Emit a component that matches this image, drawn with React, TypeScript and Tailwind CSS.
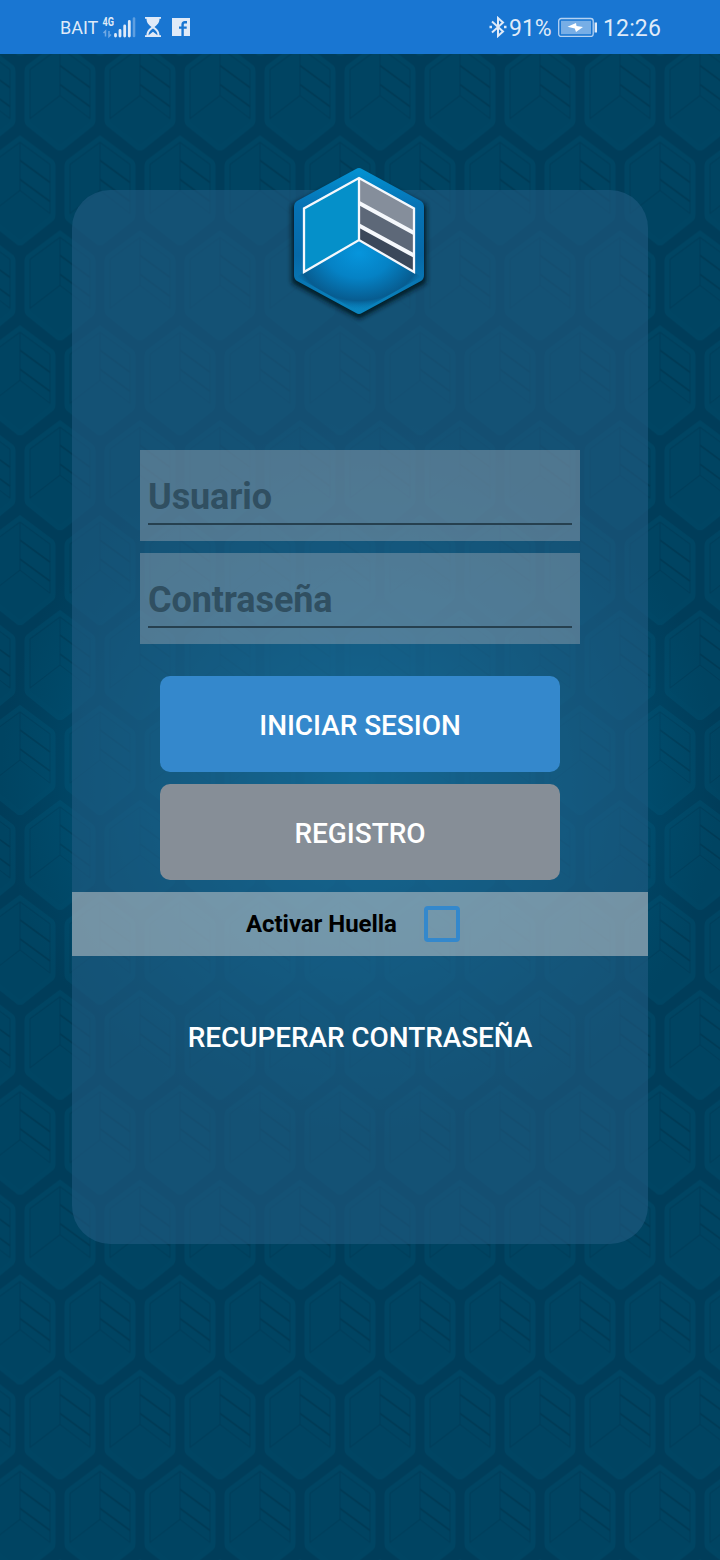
import React from 'react';

const HexCell: React.FC<{ x: number; y: number }> = ({ x, y }) => (
  <g transform={`translate(${x} ${y})`} strokeLinejoin="round">
    <path d="M0 3 L32 27 Q34.5 29 34.5 33 V81 Q34.5 85 32 87 L3 110 Q0 112 -3 110 L-32 87 Q-34.5 85 -34.5 81 V33 Q-34.5 29 -32 27 Z" fill="#004563" stroke="#004563" strokeWidth="2" />
    <path d="M0 7 L30 29 V83 L0 107 L-30 83 V29 Z" fill="#004462" />
    <path d="M0 9 L30 31 V80 L0 57 L-30 80 V31 Z M0 9 V57" fill="none" stroke="#003d5a" strokeWidth="1.1" />
    <path d="M0 27 L30 49 M0 46 L30 68" stroke="#003a55" strokeWidth="1.7" />
  </g>
);

const Background: React.FC = () => (
  <svg className="absolute inset-0 w-full h-full" aria-hidden="true">
    <defs>
      <pattern id="hexes" width="80" height="189.85" patternUnits="userSpaceOnUse" y="133.5">
        <rect width="80" height="190" fill="#003d5a" />
        <HexCell x={20} y={0} />
        <HexCell x={100} y={0} />
        <HexCell x={-20} y={94.92} />
        <HexCell x={60} y={94.92} />
        <HexCell x={-20} y={-94.92} />
        <HexCell x={60} y={-94.92} />
        <HexCell x={20} y={189.85} />
      </pattern>
      <radialGradient id="glow" gradientUnits="userSpaceOnUse" cx="360" cy="780" r="360">
        <stop offset="0" stopColor="#008cc4" stopOpacity="0.78" />
        <stop offset="0.5" stopColor="#0080b8" stopOpacity="0.36" />
        <stop offset="1" stopColor="#00709c" stopOpacity="0" />
      </radialGradient>
    </defs>
    <rect width="100%" height="100%" fill="url(#hexes)" />
    <rect width="100%" height="100%" fill="url(#glow)" />
  </svg>
);

const Logo: React.FC = () => (
  <svg className="-mt-[35px] w-40 h-[175px] shrink-0" viewBox="0 0 160 175">
    <defs>
      <linearGradient id="logoBody" x1="0" y1="0" x2="0" y2="1">
        <stop offset="0" stopColor="#0293d3" />
        <stop offset="0.25" stopColor="#0673b5" />
        <stop offset="0.6" stopColor="#0669a8" />
        <stop offset="1" stopColor="#0a86c0" />
      </linearGradient>
      <radialGradient id="logoShine" gradientUnits="userSpaceOnUse" cx="0" cy="0" r="1" gradientTransform="translate(79 98) scale(72 56)">
        <stop offset="0" stopColor="#0695dc" />
        <stop offset="0.45" stopColor="#0582c5" />
        <stop offset="0.85" stopColor="#075c90" />
        <stop offset="1" stopColor="#0675b0" stopOpacity="0" />
      </radialGradient>
      <filter id="logoShadow" x="-20%" y="-20%" width="140%" height="140%">
        <feGaussianBlur stdDeviation="2.5" />
      </filter>
    </defs>
    <path d="M79 18 L146 50 V128 L79 164 L12 128 V50 Z" fill="#04141f" opacity="0.9" filter="url(#logoShadow)" />
    <path d="M76 14 Q79 12 82 14 L141 46 Q144 48 144 52 V120 Q144 124 141 126 L82 158 Q79 160 76 158 L17 126 Q14 124 14 120 V52 Q14 48 17 46 Z" fill="url(#logoBody)" />
    <path d="M79 85 L134 117 L141 122 L79 157 L17 122 L24 117 Z" fill="url(#logoShine)" />
    <path d="M79 23 L24 53.5 V117 L79 85 Z" fill="#0590c9" />
    <path d="M79 23 L134 53.5 V79 L79 47 Z" fill="#858e9b" />
    <path d="M79 47 L134 79 V101 L79 69 Z" fill="#5d6878" />
    <path d="M79 69 L134 101 V117 L79 85 Z" fill="#3b485a" />
    <path d="M79 48 L134 78 M79 70.5 L134 100.5" stroke="#f5f8fc" strokeWidth="4.2" />
    <path d="M79 23 L134 53.5 V117 L79 85 L24 117 V53.5 Z M79 23 V85" fill="none" stroke="#f5f8fc" strokeWidth="2.3" />
  </svg>
);

const StatusBar: React.FC = () => (
  <header className="relative flex h-[54px] items-center justify-between bg-[#1976d2] pl-[60px] pr-[59px] text-[#dfeaf8]">
    <div className="flex items-center">
      <span className="w-[42px] pt-0.5 text-[18px] leading-none">BAIT</span>
      <svg className="w-[34px] h-[24px]" viewBox="102 15 34 24">
        <text x="102.5" y="26" fontSize="12.5" fontWeight="700" textLength="11.5" lengthAdjust="spacingAndGlyphs" fill="currentColor">4G</text>
        <path d="M105.5 36.5 V31 L103.5 33 M109 31 V36.5 L111 34.5" stroke="#70a9e4" strokeWidth="1.5" fill="none" />
        <path d="M115.5 34.5 V36 M120 30.5 V36 M124.7 26 V36 M129.3 21.5 V36" stroke="currentColor" strokeWidth="2.8" strokeLinecap="round" />
        <path d="M134 18.5 V36" stroke="#5e9fe0" strokeWidth="2.6" strokeLinecap="round" />
      </svg>
      <svg className="ml-[9px] w-4 h-5" viewBox="0 0 16 20">
        <path d="M0 0 H16 V1.8 H14.5 C14.5 6 12 8 9.5 10 C12 12 14.5 14 14.5 18.2 H16 V20 H0 V18.2 H1.5 C1.5 14 4 12 6.5 10 C4 8 1.5 6 1.5 1.8 H0 Z" fill="currentColor" />
        <path d="M3.5 18.2 C3.5 14.8 5.5 13 8 11.5 C10.5 13 12.5 14.8 12.5 18.2 L8 14.8 Z" fill="#1976d2" />
      </svg>
      <svg className="ml-[11px] w-[18px] h-[18px]" viewBox="0 0 18 18">
        <rect width="18" height="18" fill="currentColor" />
        <path d="M15 4.2 H12.8 Q10.6 4.2 10.6 6.5 V18 M7 9.6 H14.7" fill="none" stroke="#1976d2" strokeWidth="2.4" />
      </svg>
    </div>
    <div className="flex items-center text-[23px] leading-none">
      <svg className="w-[18px] h-[22px]" viewBox="0 0 18 22" fill="none" stroke="currentColor" strokeWidth="2">
        <path d="M3 5.5 L14 15.5 L9 20 V2 L14 6.5 L3 16.5" />
        <path d="M0.5 11 H3 M15 11 H17.5" strokeWidth="2.4" />
      </svg>
      <span className="ml-0.5 w-[49px] pt-0.5">91%</span>
      <svg className="w-[39px] h-5" viewBox="0 0 39 20">
        <rect x="0.7" y="1.5" width="34.5" height="18" rx="2.5" fill="none" stroke="#b5d2f2" strokeWidth="1.3" />
        <rect x="3" y="3.8" width="30" height="13.4" fill="#77aee6" />
        <path d="M9.5 9.8 L18 6 L18.5 9 L25 10 L18 15 L16.8 11.5 Z" fill="#fff" />
        <path d="M37.8 5.5 V15.5" stroke="currentColor" strokeWidth="2.4" />
      </svg>
      <span className="ml-1.5 w-[58px] whitespace-nowrap pt-0.5 tracking-[0.15px]">12:26</span>
    </div>
  </header>
);

const Field: React.FC<{ label: string }> = ({ label }) => (
  <label className="flex h-[91px] w-[440px] flex-col bg-[#a8b0b8]/40 px-2 pt-[22px]">
    <span className="h-[53px] border-b-2 border-[#26404f] text-[36px] font-bold leading-[51px] tracking-[-0.1px] text-[#304f61]">{label}</span>
  </label>
);

const App: React.FC = () => {
  return (
    <div className="relative h-[1560px] w-[720px] overflow-hidden bg-[#004361] font-[Roboto,sans-serif]">
      <Background />
      <StatusBar />

      <main className="relative mx-[72px] mt-[136px] flex h-[1054px] flex-col items-center rounded-[38px] bg-[#225c82]/60">
        <Logo />

        <div className="mt-[120px] flex flex-col gap-3">
          <Field label="Usuario" />
          <Field label="Contraseña" />
        </div>

        <div className="mt-8 flex flex-col gap-3 text-[28px] font-medium tracking-[-0.05px] text-white">
          <button className="h-24 w-[400px] rounded-[10px] bg-[#3488cc] pt-1">INICIAR SESION</button>
          <button className="h-24 w-[400px] rounded-[10px] bg-[#868e97] pt-1">REGISTRO</button>
        </div>

        <div className="mt-3 flex h-16 w-full items-center bg-[#d2d2d2]/50 pl-[174px]">
          <span className="w-[178px] text-[24px] font-bold tracking-[-0.05px] text-black">Activar Huella</span>
          <span className="h-9 w-9 rounded-[4px] border-4 border-[#3488cc]"></span>
        </div>

        <button className="mt-[61px] text-[28px] font-medium tracking-[-0.08px] text-white">RECUPERAR CONTRASEÑA</button>
      </main>
    </div>
  );
};

export default App;
